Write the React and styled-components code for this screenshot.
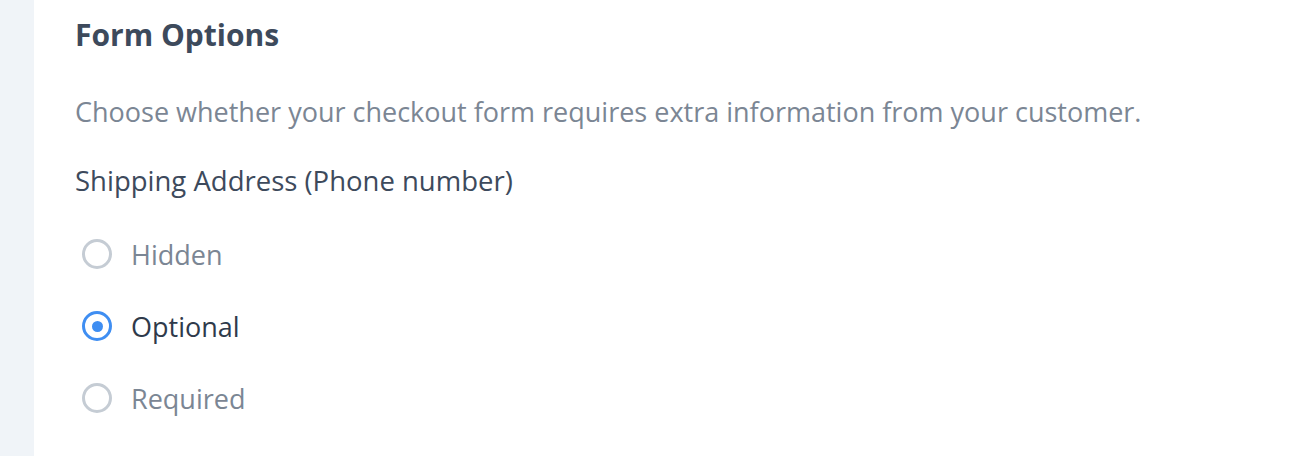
import React, { useState } from "react";
import styled, { createGlobalStyle } from "styled-components";

const Global = createGlobalStyle`
  html, body { margin: 0; padding: 0; background: #ffffff; }
  body { font-family: "Open Sans", "Noto Sans", sans-serif; }
`;

const Page = styled.div`
  display: flex;
  min-height: 456px;
  width: 1300px;
`;

const Sidebar = styled.div`
  width: 34px;
  flex-shrink: 0;
  background: #f0f4f8;
`;

const Content = styled.div`
  flex: 1;
  padding: 15px 0 0 41px;
  display: flex;
  flex-direction: column;
`;

const Heading = styled.h2`
  margin: 0;
  font-size: 30px;
  line-height: 40px;
  font-weight: 700;
  color: #3d4a5c;
`;

const Description = styled.p`
  margin: 39px 0 0 0;
  font-size: 27px;
  line-height: 36px;
  color: #7b8694;
`;

const Label = styled.div`
  margin-top: 33px;
  font-size: 27.5px;
  line-height: 36px;
  color: #3d4a5c;
`;

const Options = styled.div`
  display: flex;
  flex-direction: column;
  gap: 36px;
  margin-top: 37px;
`;

const Option = styled.label`
  display: flex;
  align-items: center;
  gap: 19px;
  height: 36px;
  padding-left: 7px;
  cursor: pointer;
  font-size: 27px;
  color: ${(p) => (p.$checked ? "#2f3a4b" : "#7b8694")};
`;

const Circle = styled.span`
  box-sizing: border-box;
  width: 30px;
  height: 30px;
  border-radius: 50%;
  border: 3.5px solid ${(p) => (p.$checked ? "#3f8ef2" : "#c5ccd4")};
  display: flex;
  align-items: center;
  justify-content: center;
  flex-shrink: 0;
  &::after {
    content: "";
    display: ${(p) => (p.$checked ? "block" : "none")};
    width: 11px;
    height: 11px;
    border-radius: 50%;
    background: #3f8ef2;
  }
`;

const HiddenInput = styled.input`
  display: none;
`;

const choices = ["Hidden", "Optional", "Required"];

export default function App() {
  const [value, setValue] = useState("Optional");
  return (
    <>
      <Global />
      <Page>
        <Sidebar />
        <Content>
          <Heading>Form Options</Heading>
          <Description>
            Choose whether your checkout form requires extra information from your customer.
          </Description>
          <Label>Shipping Address (Phone number)</Label>
          <Options>
            {choices.map((c) => (
              <Option key={c} $checked={value === c}>
                <HiddenInput
                  type="radio"
                  name="shipping"
                  checked={value === c}
                  onChange={() => setValue(c)}
                />
                <Circle $checked={value === c} />
                {c}
              </Option>
            ))}
          </Options>
        </Content>
      </Page>
    </>
  );
}
